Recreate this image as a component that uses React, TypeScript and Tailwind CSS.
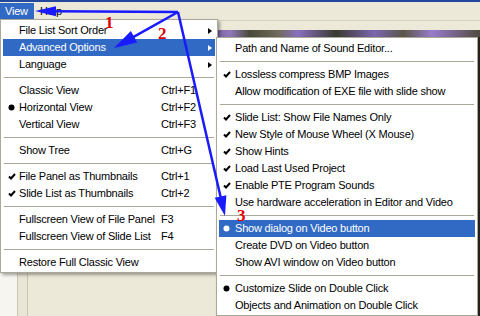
import React from 'react';

type Row =
  | 'sep'
  | { label: string; mark?: 'check' | 'dot'; shortcut?: string; sub?: boolean; active?: boolean };

const viewMenu: Row[] = [
  { label: 'File List Sort Order', sub: true },
  { label: 'Advanced Options', sub: true, active: true },
  { label: 'Language', sub: true },
  'sep',
  { label: 'Classic View', shortcut: 'Ctrl+F1' },
  { label: 'Horizontal View', shortcut: 'Ctrl+F2', mark: 'dot' },
  { label: 'Vertical View', shortcut: 'Ctrl+F3' },
  'sep',
  { label: 'Show Tree', shortcut: 'Ctrl+G' },
  'sep',
  { label: 'File Panel as Thumbnails', shortcut: 'Ctrl+1', mark: 'check' },
  { label: 'Slide List as Thumbnails', shortcut: 'Ctrl+2', mark: 'check' },
  'sep',
  { label: 'Fullscreen View of File Panel', shortcut: 'F3' },
  { label: 'Fullscreen View of Slide List', shortcut: 'F4' },
  'sep',
  { label: 'Restore Full Classic View' },
];

const advancedMenu: Row[] = [
  { label: 'Path and Name of Sound Editor...' },
  'sep',
  { label: 'Lossless compress BMP Images', mark: 'check' },
  { label: 'Allow modification of EXE file with slide show' },
  'sep',
  { label: 'Slide List: Show File Names Only', mark: 'check' },
  { label: 'New Style of Mouse Wheel (X Mouse)', mark: 'check' },
  { label: 'Show Hints', mark: 'check' },
  { label: 'Load Last Used Project', mark: 'check' },
  { label: 'Enable PTE Program Sounds', mark: 'check' },
  { label: 'Use hardware acceleration in Editor and Video' },
  'sep',
  { label: 'Show dialog on Video button', mark: 'dot', active: true },
  { label: 'Create DVD on Video button' },
  { label: 'Show AVI window on Video button' },
  'sep',
  { label: 'Customize Slide on Double Click', mark: 'dot' },
  { label: 'Objects and Animation on Double Click' },
];

const Mark = ({ kind, light }: { kind?: 'check' | 'dot'; light?: boolean }) => {
  const c = light ? '#ffffff' : '#000000';
  if (kind === 'check')
    return (
      <svg width="8" height="7" viewBox="0 0 8 7">
        <path d="M1 3.5 L3 5.5 L7 1" fill="none" stroke={c} strokeWidth="2" />
      </svg>
    );
  if (kind === 'dot')
    return (
      <svg width="7" height="7" viewBox="0 0 7 7">
        <circle cx="3.5" cy="3.5" r="3" fill={c} />
      </svg>
    );
  return null;
};

const Menu = ({ rows, labelW, markPad }: { rows: Row[]; labelW?: string; markPad: string }) => (
  <div className="px-[2px] pt-[2px] pb-[1px]">
    {rows.map((r, i) =>
      r === 'sep' ? (
        <div key={i} className="h-[9px] flex items-center px-[1px]">
          <div className="h-px w-full bg-[#aca899]" />
        </div>
      ) : (
        <div
          key={i}
          className={`h-[17px] flex items-center whitespace-nowrap ${r.active ? 'bg-[#316ac5] text-white' : 'text-black'}`}
        >
          <div className={`w-[16px] shrink-0 flex items-center ${markPad}`}>
            <Mark kind={r.mark} light={r.active} />
          </div>
          <div className={labelW ?? ''}>{r.label}</div>
          {r.shortcut && <div>{r.shortcut}</div>}
          {r.sub && (
            <div className="ml-auto mr-[3px] w-0 h-0 border-y-[3.5px] border-y-transparent border-l-[4px]" style={{ borderLeftColor: r.active ? '#fff' : '#000' }} />
          )}
        </div>
      ),
    )}
  </div>
);

const apex = [178, 12];
const arrows = [
  { tip: [35, 11], len: 21, w: 5 },
  { tip: [114, 48], len: 23, w: 6.5 },
  { tip: [225, 216], len: 20, w: 6 },
];

const Arrows = () => (
  <svg className="absolute inset-0 pointer-events-none" width="480" height="316">
    {arrows.map((a, i) => {
      const dx = a.tip[0] - apex[0];
      const dy = a.tip[1] - apex[1];
      const d = Math.hypot(dx, dy);
      const ux = dx / d;
      const uy = dy / d;
      const bx = a.tip[0] - ux * a.len;
      const by = a.tip[1] - uy * a.len;
      const pts = `${a.tip[0]},${a.tip[1]} ${bx - uy * a.w},${by + ux * a.w} ${bx + uy * a.w},${by - ux * a.w}`;
      return (
        <g key={i}>
          <line x1={apex[0]} y1={apex[1]} x2={bx + ux * 2} y2={by + uy * 2} stroke="#1a1aff" strokeWidth="2.5" />
          <polygon points={pts} fill="#1a1aff" />
        </g>
      );
    })}
    <g fill="#e00000" fontFamily="'Liberation Serif', serif" fontSize="17" fontWeight="bold">
      <text x="105" y="28">1</text>
      <text x="158" y="39">2</text>
      <text x="237" y="221">3</text>
    </g>
  </svg>
);

export default function App() {
  return (
    <div className="relative w-[480px] h-[316px] overflow-hidden bg-[#ece9d8] font-['Tahoma','Liberation_Sans',sans-serif] text-[11px] tracking-[-0.2px]">
      <div className="flex flex-col h-full">
        <div className="h-[2px] bg-[#24479e]" />
        <div className="h-[18px] flex items-stretch pt-[1px]">
          <div className="w-[34px] bg-[#316ac5] text-white pl-[5px] flex items-center">View</div>
          <div className="pl-[6px] flex items-center text-black">Help</div>
        </div>
        <div className="h-[10px] border-t border-[#d6d2c2] bg-[#ece9d8]" />
        <div className="h-[7px] bg-[linear-gradient(90deg,#5c5a48_0%,#7a63a8_45%,#8e78b8_48%,#4a4a3a_52%,#6f6a5c_58%,#8a6fc0_62%,#3a3a30_70%,#7c66b0_78%,#5a5648_84%,#9a7ccc_90%,#4f4b3f_100%)]" />
        <div className="flex-1 flex">
          <div className="w-[17px] bg-[#f6f5f0]" />
          <div className="w-[11px] border-x border-[#cbc6b2] bg-[#e9e6d7]" />
          <div className="flex-1 bg-[#ece9d8]" />
          <div className="w-[3px] bg-[#2e2c24]" />
        </div>
      </div>

      <div className="absolute left-0 top-[19px] w-[218px] bg-white border border-[#aca899] shadow-[2px_2px_3px_rgba(0,0,0,0.35)]">
        <Menu rows={viewMenu} labelW="w-[142px]" markPad="pl-[5px]" />
      </div>

      <div className="absolute left-[216px] top-[37px] w-[262px] bg-white border border-[#aca899] shadow-[2px_2px_3px_rgba(0,0,0,0.35)]">
        <Menu rows={advancedMenu} markPad="pl-[4px]" />
      </div>

      <Arrows />
    </div>
  );
}
